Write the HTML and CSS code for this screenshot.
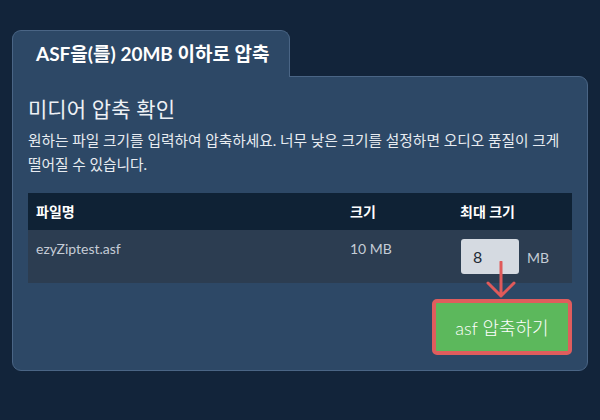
FILE: index.html
```html
<!DOCTYPE html>
<html lang="ko">
<head>
<meta charset="utf-8">
<title>ASF 압축</title>
<link rel="stylesheet" href="styles.css">
</head>
<body>
<div class="page">
  <div class="tab">ASF을(를) 20MB 이하로 압축</div>
  <div class="panel">
    <h2 class="heading">미디어 압축 확인</h2>
    <p class="desc">원하는 파일 크기를 입력하여 압축하세요. 너무 낮은 크기를 설정하면 오디오 품질이 크게 떨어질 수 있습니다.</p>
    <table class="files">
      <thead>
        <tr>
          <th class="c-name">파일명</th>
          <th class="c-size">크기</th>
          <th class="c-max">최대 크기</th>
        </tr>
      </thead>
      <tbody>
        <tr>
          <td class="c-name">ezyZiptest.asf</td>
          <td class="c-size">10 MB</td>
          <td class="c-max">
            <div class="max-wrap">
              <input class="max-input" type="text" value="8">
              <span class="unit">MB</span>
              <svg class="arrow" width="32" height="40" viewBox="0 0 32 40">
                <path d="M16 1 V35 M3 22 L16 35 L29 22" fill="none" stroke="#e05a5a" stroke-width="3" stroke-linecap="round" stroke-linejoin="round"/>
              </svg>
            </div>
          </td>
        </tr>
      </tbody>
    </table>
    <div class="actions">
      <button class="go">asf 압축하기</button>
    </div>
  </div>
</div>
</body>
</html>
```

FILE: styles.css
```css
html, body {
  margin: 0;
  padding: 0;
  background: #12243a;
}
body {
  font-family: "Lato", "Noto Sans CJK KR", sans-serif;
  color: #ffffff;
  word-break: keep-all;
}
.page {
  padding: 30px 13px 0 12px;
  display: flex;
  flex-direction: column;
  align-items: flex-start;
}
.tab {
  position: relative;
  z-index: 1;
  box-sizing: border-box;
  width: 278px;
  height: 47px;
  margin-bottom: -1px;
  padding: 0 0 0 23px;
  background: #2d4866;
  border: 1px solid #4a6585;
  border-bottom: none;
  border-radius: 9px 9px 0 0;
  font-size: 19px;
  font-weight: 700;
  line-height: 46px;
  white-space: nowrap;
}
.panel {
  box-sizing: border-box;
  width: 576px;
  height: 295px;
  padding: 17px 15px 15px 15px;
  background: #2d4866;
  border: 1px solid #4a6585;
  border-radius: 0 9px 9px 9px;
  display: flex;
  flex-direction: column;
}
.heading {
  margin: 0;
  font-size: 21px;
  font-weight: 400;
  line-height: 28px;
  color: #eef1f5;
  font-family: "Noto Sans CJK KR", sans-serif;
}
.desc {
  margin: 6px 0 0 0;
  font-size: 14.7px;
  line-height: 24px;
  color: #e8ecf1;
  font-family: "Lato", "Noto Sans CJK KR", sans-serif;
}
.files {
  margin-top: 17px;
  width: 544px;
  border-collapse: collapse;
  table-layout: fixed;
}
.files th, .files td {
  text-align: left;
  vertical-align: top;
  padding: 9px 8px;
  font-size: 14px;
  line-height: 19px;
}
.files th {
  background: #0f2235;
  color: #ffffff;
  font-weight: 700;
}
.files td {
  background: #2c3d51;
  color: #c5ccd6;
}
.c-name { width: 298px; }
.c-size { width: 94px; }
.c-max { width: 104px; }
.max-wrap {
  position: relative;
  display: flex;
  align-items: center;
  gap: 8px;
  padding-left: 1px;
}
.max-input {
  box-sizing: border-box;
  width: 58px;
  height: 35px;
  margin: 0;
  padding: 0 12px;
  border: none;
  border-radius: 3px;
  background: #d5dae1;
  color: #1f2a36;
  font-family: "Lato", sans-serif;
  font-size: 16px;
  outline: none;
}
.unit {
  font-size: 14px;
  color: #c5ccd6;
  margin-top: 1px;
}
.arrow {
  position: absolute;
  left: 25px;
  top: 22px;
}
.actions {
  display: flex;
  justify-content: flex-end;
  margin-top: 16px;
}
.go {
  box-sizing: border-box;
  width: 140px;
  height: 56px;
  background: #5cb85c;
  border: 4px solid #e05d5d;
  border-radius: 5px;
  color: #ffffff;
  font-family: "Lato", "Noto Sans CJK KR", sans-serif;
  font-size: 18px;
  font-weight: 300;
  padding: 0;
}
```
